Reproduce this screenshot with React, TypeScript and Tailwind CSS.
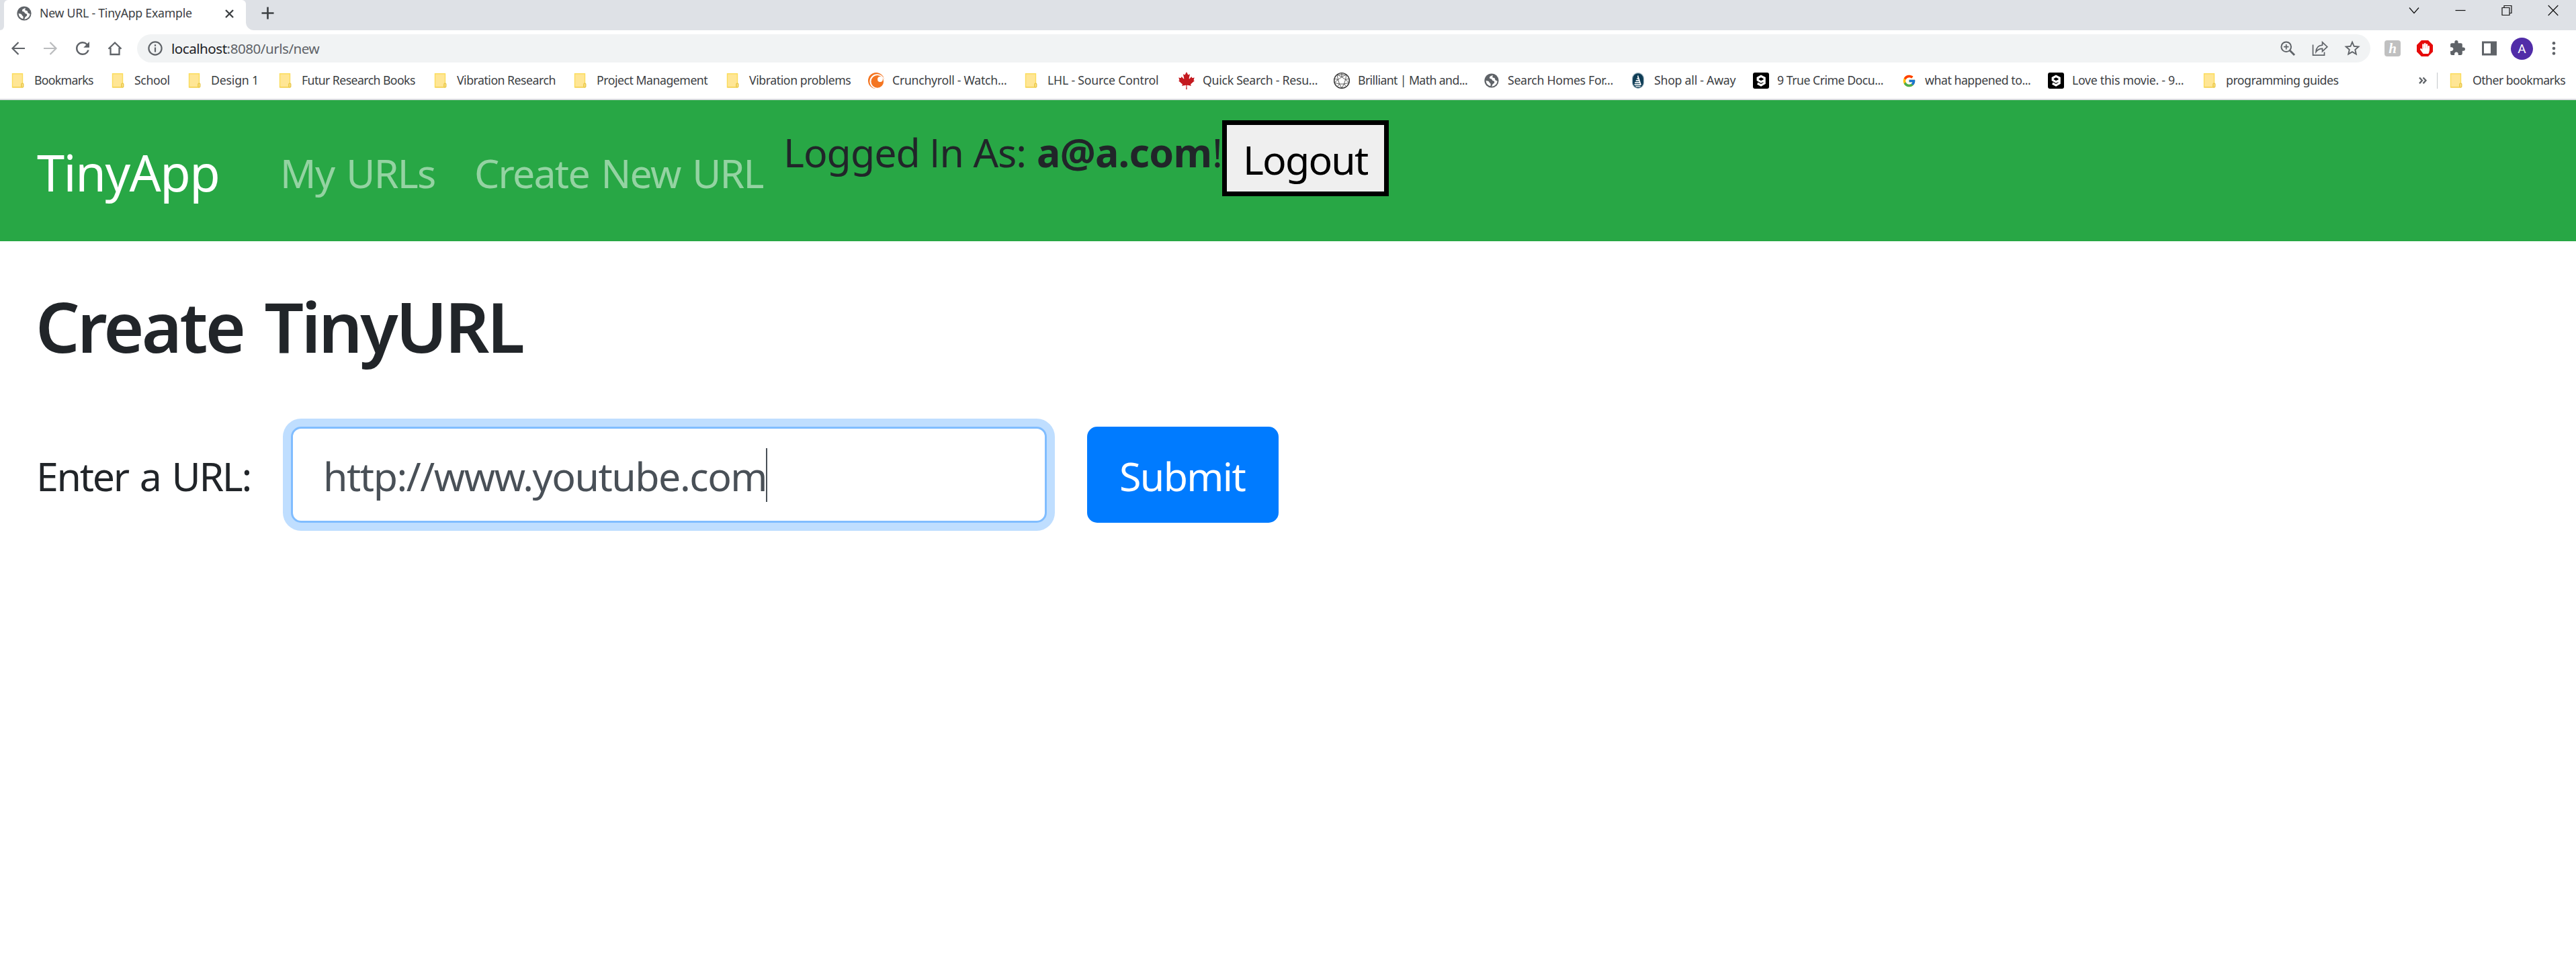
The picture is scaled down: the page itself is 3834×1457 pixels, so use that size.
import React from "react";
import { FcGoogle } from "react-icons/fc";
import { FaCanadianMapleLeaf, FaHandPaper } from "react-icons/fa";
import { MdExtension, MdRefresh, MdStarBorder } from "react-icons/md";

function Folder() {
  return (
    <svg width="24" height="24" viewBox="0 0 24 24">
      <path d="M3.5 1.8h15v16.5h-1.2v3.4H3.5z" fill="#ffe695" stroke="#fbdc5c" strokeWidth="1.4" />
      <rect x="17" y="16" width="2.8" height="5.8" rx="1" fill="#ffe695" stroke="#e5c037" strokeWidth="1.2" />
      <path d="M3.5 21.8h15" stroke="#f0cd4c" strokeWidth="1.2" />
    </svg>
  );
}

function Globe() {
  return (
    <svg width="24" height="24" viewBox="0 0 24 24">
      <circle cx="12" cy="12" r="10.6" fill="#5f6368" />
      <path
        d="M13.5 3.8C12 5.3 9.2 5 9 7.5c-.1 2 2 1.6 3 2.3 1 .8.6 2.2 2.2 2.4 1.5.2 2.3 1 2 2.5-.4 1.7-2.4 1.8-3 3.2-.3.9-.2 1.5-1.2 2.6 4.5 0 8.100-3.600 8.600-7.600-1-1-2-.6-2.900-1.600-1-1.100 0-2.300-1.300-3.100-1.200-.7-2.700.1-3-1.100-.3-1.100.6-1.700.1-3.300zM3.700 11.800c1.300.8 2.700.5 3.800 1.200 1.200.8 1 1.900 2.100 2.700.9.600 1.400 1 1 2.300-.2.700-.2 1.300-.1 2.100-3.900-.6-6.900-3.900-6.800-8.300z"
        fill="#fff"
      />
    </svg>
  );
}

function Crunchyroll() {
  return (
    <svg width="24" height="24" viewBox="0 0 24 24">
      <circle cx="12" cy="12" r="12" fill="#f47521" />
      <circle cx="13.4" cy="13.2" r="11" fill="#fff" />
      <circle cx="13.8" cy="13.4" r="9.3" fill="#f47521" />
      <circle cx="18" cy="10" r="3.900" fill="#fff" />
    </svg>
  );
}

function Leaf() {
  return <FaCanadianMapleLeaf className="h-[26px] w-[26px] shrink-0 text-[#c4191f]" />;
}

function Brilliant() {
  return (
    <svg width="24" height="24" viewBox="0 0 24 24" fill="none" stroke="#333" strokeWidth=".8">
      <circle cx="12" cy="12" r="11.4" fill="#fff" strokeWidth="1.2" />
      <path d="M12 6.500 17.500 10.500 15.500 17H8.500L6.500 10.500zM12 .7v5.800M23 9l-5.500 1.500M18.800 21 15.500 17M5.200 21l3.300-4M1 9l5.500 1.500M5 3l7 3.500L19 3l-1.500 7.500L23 15l-7.500 2L12 23l-3.500-6L1 15l5.500-4.500zM5 3h14l4 6v6l-4.200 6L12 23l-6.800-2L1 15V9z" />
    </svg>
  );
}

function Away() {
  return (
    <svg width="24" height="24" viewBox="0 0 24 24">
      <rect x="3.5" y=".6" width="17" height="22.8" rx="8.5" fill="#0e3c55" stroke="#a9bcc6" strokeWidth="1.2" />
      <path d="M12 3.500 17 18.500H15.200L11 6z" fill="#fff" />
      <path d="M10.500 8.200h1.600l.5 1.600H9.800zM9 11.200h4l.5 1.700H8.300zM7.500 14.200h6.500l.5 1.700H6.800zM6.300 17.200h9l.5 1.700H6.900zM8 20h8l-1 1.200H9z" fill="#fff" />
    </svg>
  );
}

function NineGag() {
  return (
    <svg width="24" height="24" viewBox="0 0 24 24">
      <rect width="24" height="24" rx="3" fill="#000" />
      <path d="M17.200 11.500 12 14 7.200 11V8L12 5.300 17.200 8v7.800L12 18.800 6.800 16" fill="none" stroke="#fff" strokeWidth="3.200" />
    </svg>
  );
}

function Google() {
  return <FcGoogle size={21} />;
}

type Mark = { icon: () => React.JSX.Element; label: string; box: string; tracking: string };

const marks: Mark[] = [
  { icon: Folder, label: "Bookmarks", box: "w-[149px]", tracking: "tracking-[-0.69px]" },
  { icon: Folder, label: "School", box: "w-[114px]", tracking: "tracking-[-0.41px]" },
  { icon: Folder, label: "Design 1", box: "w-[135px]", tracking: "tracking-[-0.19px]" },
  { icon: Folder, label: "Futur Research Books", box: "w-[231px]", tracking: "tracking-[-0.58px]" },
  { icon: Folder, label: "Vibration Research", box: "w-[208px]", tracking: "tracking-[-0.5px]" },
  { icon: Folder, label: "Project Management", box: "w-[227px]", tracking: "tracking-[-0.48px]" },
  { icon: Folder, label: "Vibration problems", box: "w-[213px]", tracking: "tracking-[-0.43px]" },
  { icon: Crunchyroll, label: "Crunchyroll - Watch...", box: "w-[231px]", tracking: "tracking-[-0.28px]" },
  { icon: Folder, label: "LHL - Source Control", box: "w-[231px]", tracking: "tracking-[-0.2px]" },
  { icon: Leaf, label: "Quick Search - Resu...", box: "w-[231px]", tracking: "tracking-[-0.28px]" },
  { icon: Brilliant, label: "Brilliant | Math and...", box: "w-[223px]", tracking: "tracking-[-0.61px]" },
  { icon: Globe, label: "Search Homes For...", box: "w-[218px]", tracking: "tracking-[-0.3px]" },
  { icon: Away, label: "Shop all - Away", box: "w-[183px]", tracking: "tracking-[-0.24px]" },
  { icon: NineGag, label: "9 True Crime Docu...", box: "w-[220px]", tracking: "tracking-[-0.5px]" },
  { icon: Google, label: "what happened to...", box: "w-[219px]", tracking: "tracking-[-0.46px]" },
  { icon: NineGag, label: "Love this movie. - 9...", box: "w-[229px]", tracking: "tracking-[-0.27px]" },
  { icon: Folder, label: "programming guides", box: "w-[320px]", tracking: "tracking-[-0.48px]" },
];

function Bookmark({ icon: Icon, label, box, tracking }: Mark) {
  return (
    <div className={`flex h-full shrink-0 items-center gap-3 ${box}`}>
      <span className="flex size-6 shrink-0 items-center justify-center">
        <Icon />
      </span>
      <span className={`pb-[2px] text-[17.7px] leading-6 whitespace-nowrap ${tracking}`}>{label}</span>
    </div>
  );
}

function TabStrip() {
  return (
    <div className="flex h-[45px] bg-[#dee1e6]">
      <div className="flex w-[6px] items-end bg-white">
        <div className="h-full w-[6px] rounded-br-[8px] bg-[#dee1e6]" />
      </div>
      <div className="flex w-[360px] items-center rounded-t-[6px] bg-white pb-[5px] pl-[18px]">
        <Globe />
        <span className="w-[287px] pb-[2px] pl-[11px] text-[17.7px] leading-6 tracking-[-0.24px] whitespace-nowrap">
          New URL - TinyApp Example
        </span>
        <svg width="13" height="13" viewBox="0 0 13 13" stroke="#3c4043" strokeWidth="2.4">
          <path d="m1 1 11 11M12 1 1 12" />
        </svg>
      </div>
      <div className="flex w-[12px] items-end">
        <div className="h-[12px] w-[12px] bg-white">
          <div className="h-full w-full rounded-bl-[12px] bg-[#dee1e6]" />
        </div>
      </div>
      <svg className="mt-[10px] ml-[11px]" width="19" height="19" viewBox="0 0 19 19" stroke="#3c4043" strokeWidth="2.6">
        <path d="M9.500.5v18M.5 9.500h18" />
      </svg>
      <div className="mt-[7px] mr-[26px] ml-auto flex h-[17px] gap-[53px] text-[#111]">
        <svg width="16" height="17" viewBox="0 0 16 17" fill="none" stroke="currentColor" strokeWidth="1.2">
          <path d="m1 4.500 7 8 7-8" />
        </svg>
        <svg width="16" height="17" viewBox="0 0 16 17" fill="none" stroke="currentColor" strokeWidth="1.2">
          <path d="M.5 8.500h15" />
        </svg>
        <svg width="16" height="17" viewBox="0 0 16 17" fill="none" stroke="currentColor" strokeWidth="1.2">
          <path d="M1 4.500h11v11H1zM4 4.500v-3h11v11h-3" />
        </svg>
        <svg width="16" height="17" viewBox="0 0 16 17" fill="none" stroke="currentColor" strokeWidth="1.2">
          <path d="m.7 1 14.600 15M15.300 1 .7 16" />
        </svg>
      </div>
    </div>
  );
}

function Toolbar() {
  return (
    <div className="flex h-[54px] items-center text-[#5f6368]">
      <div className="flex w-[204px] items-center gap-6 pl-[15px]">
        <svg width="24" height="24" viewBox="0 0 24 24" fill="none" stroke="currentColor" strokeWidth="2.2">
          <path d="M22 12H3.500M12.500 3l-9 9 9 9" />
        </svg>
        <svg width="24" height="24" viewBox="0 0 24 24" fill="none" stroke="#babcbe" strokeWidth="2.2">
          <path d="M2 12h18.500M11.500 3l9 9-9 9" />
        </svg>
        <MdRefresh className="-mx-[3px] h-[30px] w-[30px]" />
        <svg width="24" height="24" viewBox="0 0 24 24" fill="none" stroke="currentColor" strokeWidth="2.3">
          <path d="M2.500 12.800 12 3.500l9.500 9.300M5.500 11v10h13V11" />
        </svg>
      </div>
      <div className="flex h-[42px] w-[3324px] items-center rounded-full bg-[#f1f3f4] pr-[15px] pl-[15px]">
        <svg width="24" height="24" viewBox="0 0 24 24" fill="none" stroke="currentColor" strokeWidth="2.2">
          <circle cx="12" cy="12" r="9.6" />
          <path d="M12 10.500v7M12 6.300v2.400" />
        </svg>
        <span className="pl-[12px] text-[20.6px] leading-[30px] tracking-[-0.49px] whitespace-nowrap text-[#5f6368]">
          <span className="text-[#202124]">localhost</span>:8080/urls/new
        </span>
        <div className="ml-auto flex items-center gap-6">
          <svg width="24" height="24" viewBox="0 0 24 24" fill="none" stroke="currentColor" strokeWidth="2">
            <circle cx="9.7" cy="9.7" r="7.3" />
            <path d="m15 15 7 7" strokeWidth="2.8" />
            <path d="M9.700 6v7.400M6 9.700h7.400" strokeWidth="1.7" />
          </svg>
          <svg width="24" height="24" viewBox="0 0 24 24" fill="none" stroke="currentColor" strokeWidth="1.7">
            <path d="M1.500 6.500v15.600h17v-4.600" />
            <path d="M15.500 2.800v4.300C9.500 7.500 6.300 11.200 6 17.300c2.400-3.400 5.300-4.900 9.500-4.900v4.200l7.300-6.900z" />
          </svg>
          <MdStarBorder className="-mx-[2px] h-[28px] w-[28px]" />
        </div>
      </div>
      <div className="flex items-center pl-[21px]">
        <span className="flex size-6 items-center justify-center rounded-[4px] bg-[#c0c0c0] font-['Liberation_Serif'] text-[21px] leading-6 font-bold text-white italic">
          h
        </span>
        <span className="ml-6 flex size-6 items-center justify-center bg-[#e60a0a] [clip-path:polygon(29%_0,71%_0,100%_29%,100%_71%,71%_100%,29%_100%,0_71%,0_29%)]">
          <FaHandPaper size={16} color="#fff" />
        </span>
        <MdExtension className="mb-[2px] ml-[24px] h-[25px] w-[25px]" />
        <svg className="ml-[23px]" width="24" height="24" viewBox="0 0 24 24">
          <path fillRule="evenodd" d="M1 1.500h22v21H1zM4 4.500v15h10v-15z" fill="currentColor" />
        </svg>
        <span className="ml-[20px] flex size-[33px] items-center justify-center rounded-full bg-[#512da8] font-['Roboto'] text-[19px] leading-none text-white">
          A
        </span>
        <svg className="ml-[26px]" width="10" height="24" viewBox="0 0 10 24" fill="currentColor">
          <circle cx="5" cy="4.2" r="2.3" />
          <circle cx="5" cy="12" r="2.3" />
          <circle cx="5" cy="19.5" r="2.3" />
        </svg>
      </div>
    </div>
  );
}

function BookmarksBar() {
  return (
    <div className="flex h-[50px] border-b-2 border-[#dadce0] pb-[6px] pl-[15px]">
      {marks.map((mark, i) => (
        <Bookmark key={i} {...mark} />
      ))}
      <div className="flex items-center">
        <svg className="ml-[2px]" width="14" height="14" viewBox="0 0 14 14" fill="none" stroke="#5f6368" strokeWidth="2.3">
          <path d="m2 2.500 4 4.300-4 4.300M7.500 2.500l4 4.300-4 4.300" />
        </svg>
        <div className="mr-[16px] ml-[14px] h-6 w-px bg-[#c4c7cb]" />
      </div>
      <Bookmark icon={Folder} label="Other bookmarks" box="w-[180px]" tracking="tracking-[-0.55px]" />
    </div>
  );
}

function NavBar() {
  return (
    <nav className="flex h-[210px] items-start bg-[#28a745] pl-[55px] text-[59px] leading-[90px] whitespace-nowrap text-[#212529]">
      <a className="mt-[52px] w-[362px] text-[74px] leading-[112px] tracking-[-1.53px] text-white">TinyApp</a>
      <a className="mt-[63px] w-[289px] tracking-[-1.6px] text-white/50 [word-spacing:4px]">My URLs</a>
      <a className="mt-[63px] w-[460px] tracking-[-1.75px] text-white/50 [word-spacing:4px]">Create New URL</a>
      <div className="mt-[32px] flex w-[653px] tracking-[-1px]">
        <span className="w-[377px]">
          Logged <span className="font-['Open_Sans']">I</span>n As:
        </span>
        <b className="w-[261px] font-bold tracking-[-0.68px]">a@a.com</b>
        <span>!</span>
      </div>
      <button className="mt-[30px] h-[113px] w-[248px] border-[7px] border-black bg-[#efefef] pt-[3px] pl-[24px] text-left leading-[90px] tracking-[-1.81px] text-black">
        Logout
      </button>
    </nav>
  );
}

function CreateForm() {
  return (
    <main className="pl-[53px] text-[59px] whitespace-nowrap text-[#212529]">
      <h3 className="mt-[63px] text-[103px] leading-[126px] font-semibold tracking-[-3.6px] [word-spacing:8px]">Create TinyURL</h3>
      <form className="mt-[87px] flex h-[143px] items-center pl-px">
        <label className="w-[379px] pt-[3px] leading-[90px] tracking-[-2.3px] [word-spacing:4px]">Enter a URL:</label>
        <div className="flex h-full w-[1125px] items-center rounded-[15px] border-[3px] border-[#80bdff] bg-white pl-[45px] leading-[90px] text-[#495057] shadow-[0_0_0_12px_#bfdeff]">
          <span className="w-[659px] pt-[3px] tracking-[-1.46px]">http://www.youtube.com</span>
          <span className="h-[80px] w-[2px] bg-[#495057]" />
        </div>
        <button
          type="button"
          className="ml-[60px] h-full w-[285px] rounded-[15px] bg-[#007bff] pt-[3px] pl-[48px] text-left leading-[90px] tracking-[-1.61px] text-white"
        >
          Submit
        </button>
      </form>
    </main>
  );
}

export default function App() {
  return (
    <div className="min-h-[1457px] w-[3834px] overflow-hidden bg-white font-['Noto_Sans',sans-serif] text-[#3c4043]">
      <TabStrip />
      <Toolbar />
      <BookmarksBar />
      <NavBar />
      <CreateForm />
    </div>
  );
}
